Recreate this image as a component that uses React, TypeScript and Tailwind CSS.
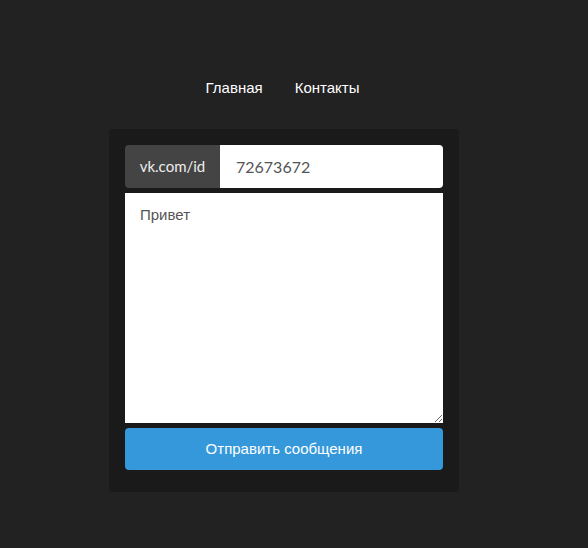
export default function App() {
  return (
    <div className="min-h-[548px] bg-[#222222] pr-[20px] font-['Liberation_Sans',Arial,sans-serif]">
      <nav className="flex justify-center gap-8 pt-[79px] text-[15px] leading-[18px] text-white">
        <a className="ml-[-3px]">Главная</a>
        <a>Контакты</a>
      </nav>

      <div className="mx-auto mt-[32px] w-[350px] rounded bg-[#1a1a1a] px-4 pt-4 pb-[22px]">
        <div className="flex h-[43px]">
          <span className="flex w-[95px] items-center justify-center rounded-l bg-[#444444] font-['Lato',sans-serif] text-[15px] text-[#eeeeee]">
            vk.com/id
          </span>
          <input
            defaultValue="72673672"
            className="min-w-0 flex-1 rounded-r bg-white px-4 font-['Lato',sans-serif] text-[16px] text-[#555555] outline-none"
          />
        </div>
        <textarea
          defaultValue="Привет"
          className="mt-[5px] block h-[230px] w-full bg-white px-[15px] pt-[11px] text-[15px] text-[#555555] outline-none"
        />
        <button className="mt-[5px] h-[42px] w-full rounded bg-[#3498db] text-[15px] text-white">
          Отправить сообщения
        </button>
      </div>
    </div>
  );
}
